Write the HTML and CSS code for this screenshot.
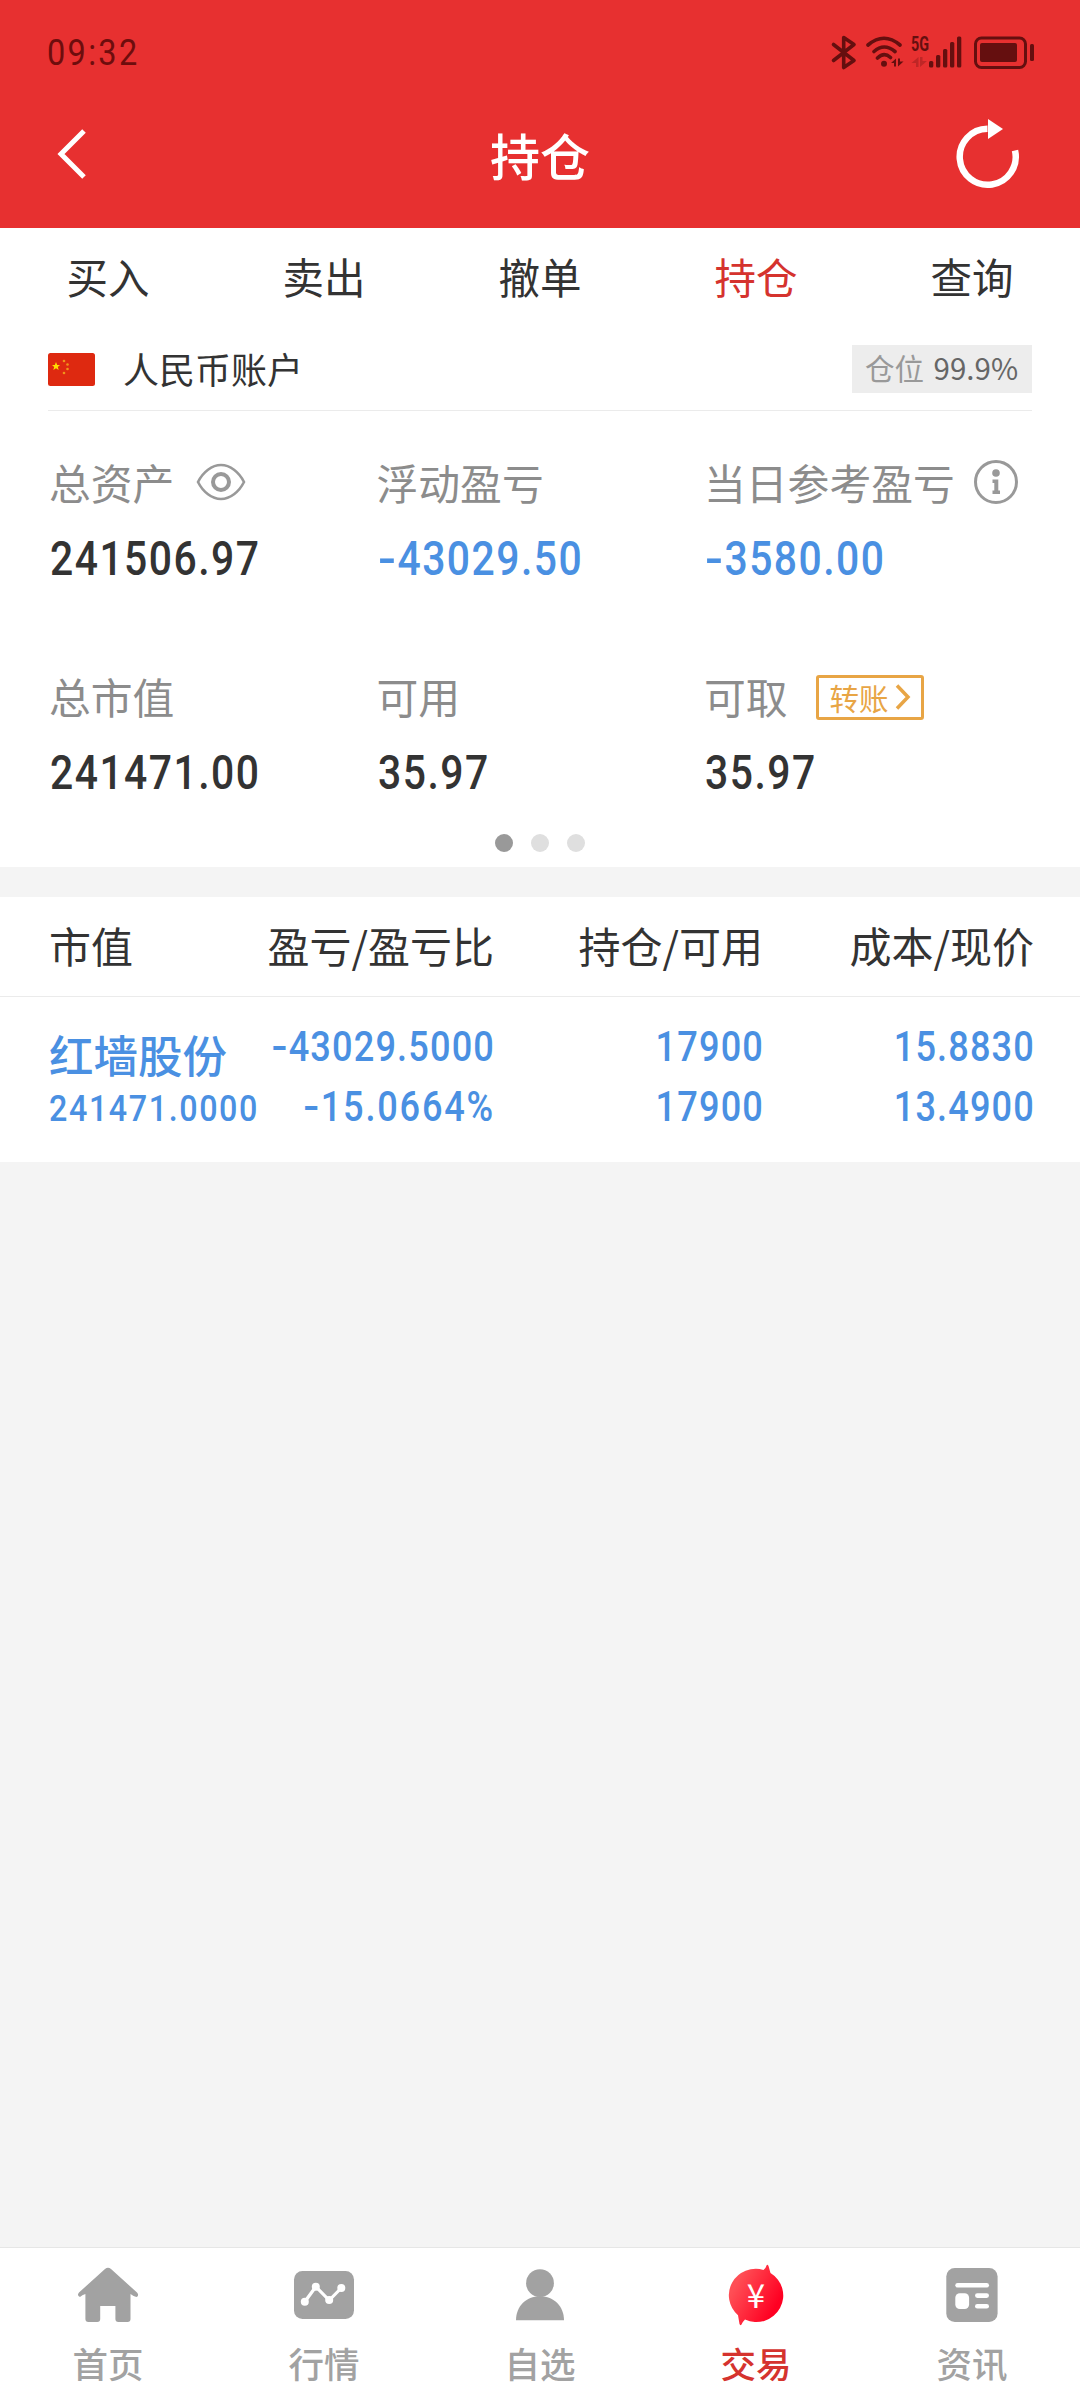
FILE: index.html
```html
<!DOCTYPE html>
<html lang="zh-CN">
<head>
    <meta charset="utf-8">
    <title>持仓</title>
    <link rel="stylesheet" href="styles.css">
</head>
<body>
<div id="app">
    <!-- 顶部 -->
    <header class="header">
        <div class="status">
            <span class="time">09:32</span>
            <svg class="status-icons" viewBox="30 30 208 44" width="208" height="44">
                <path class="s" stroke-width="3.6" d="M33.500 44.500L54 60.500L43.700 67.500V37.500L54 44.500L33.500 60.500"/>
                <path class="s" stroke-width="3.6" d="M68 45Q84 31.500 100 45M74 51.500Q84 42.500 95 51.500M77.500 58Q84 51.500 90.500 57.500"/>
                <circle cx="84" cy="63.800" r="3"/>
                <path d="M91 63L96 58.500V66.500H94V63ZM98 58.500H100V61.500H103.500L98 66.500Z"/>
                <text x="111" y="50.500" textLength="18" lengthAdjust="spacingAndGlyphs">5G</text>
                <path opacity=".3" d="M111.500 63L118.500 57V67H116V63ZM120 57H122.500V61H127L120 67Z"/>
                <rect x="129" y="61" width="4.300" height="6.500" rx="1.500"/>
                <rect x="136" y="55" width="4.300" height="12.500" rx="1.500"/>
                <rect x="143" y="49" width="4.300" height="18.500" rx="1.500"/>
                <rect x="150" y="42" width="4.300" height="25.500" rx="1.500"/>
                <rect x="157" y="36.500" width="4.300" height="31" rx="1.500"/>
                <rect class="s" x="175.500" y="38" width="50" height="29.500" rx="6" stroke-width="3"/>
                <rect x="180" y="43" width="37" height="19" rx="2"/>
                <rect x="230" y="44" width="4" height="17" rx="1.500"/>
            </svg>
        </div>
        <div class="title-bar">
            <svg class="back" viewBox="0 0 40 60" width="40" height="60"><path d="M34 7L11 30L34 53"/></svg>
            <h1>持仓</h1>
            <svg class="refresh" viewBox="0 0 72 76" width="72" height="76">
                <path class="ring" d="M63 34.500A28 28 0 1 1 35.500 12.800"/>
                <path class="arrow" d="M36 3L51 13L36 23Z"/>
            </svg>
        </div>
    </header>

    <!-- 交易菜单 -->
    <ul class="tabs">
        <li>买入</li>
        <li>卖出</li>
        <li>撤单</li>
        <li class="tab-on">持仓</li>
        <li>查询</li>
    </ul>

    <!-- 资产部分 -->
    <section class="asset">
        <div class="account">
            <svg class="flag" viewBox="0 0 47 33" width="47" height="33">
                <rect width="47" height="33" rx="2.500" fill="#de2910"/>
                <path fill="#ffde00" d="M8 9L9.200 12H12L9.800 14L10.700 17L8 15.200L5.300 17L6.200 14L4 12H6.800Z"/>
                <g fill="#f0941a"><circle cx="16" cy="8" r="1.300"/><circle cx="19.500" cy="11.500" r="1.300"/><circle cx="19.500" cy="16" r="1.300"/><circle cx="16" cy="20" r="1.300"/></g>
            </svg>
            <span class="account-name">人民币账户</span>
            <span class="position">仓位 <b>99.9%</b></span>
        </div>
        <div class="asset-list">
            <div class="item">
                <div class="label">总资产
                    <svg class="eye" viewBox="0 0 50 38" width="50" height="38">
                        <path d="M2 19C7 9 16 2 25 2S43 9 48 19C43 29 34 36 25 36S7 29 2 19Z"/>
                        <circle cx="25" cy="19" r="8"/>
                    </svg>
                </div>
                <div class="value">241506.97</div>
            </div>
            <div class="item">
                <div class="label">浮动盈亏</div>
                <div class="value blue"><i>-</i>43029.50</div>
            </div>
            <div class="item">
                <div class="label">当日参考盈亏
                    <svg class="info" viewBox="0 0 46 46" width="46" height="46">
                        <circle class="ring" cx="23" cy="23" r="20.500"/>
                        <circle cx="23" cy="14" r="3.800"/>
                        <path d="M19.500 20.500H25.300V31.500H27V35H19.500V31.500H21.300V24H19.500Z"/>
                    </svg>
                </div>
                <div class="value blue"><i>-</i>3580.00</div>
            </div>
            <div class="item">
                <div class="label">总市值</div>
                <div class="value">241471.00</div>
            </div>
            <div class="item">
                <div class="label">可用</div>
                <div class="value">35.97</div>
            </div>
            <div class="item">
                <div class="label">可取
                    <a class="transfer">转账<svg viewBox="0 0 16 28" width="16" height="28"><path d="M2 2.500L13 14L2 25.500"/></svg></a>
                </div>
                <div class="value">35.97</div>
            </div>
        </div>
        <div class="dots"><span class="dot-on"></span><span></span><span></span></div>
    </section>

    <!-- 持仓列表 -->
    <section class="hold">
        <div class="row hold-head">
            <span>市值</span><span>盈亏/盈亏比</span><span>持仓/可用</span><span>成本/现价</span>
        </div>
        <div class="row hold-row">
            <div><p class="name">红墙股份</p><p class="market">241471.0000</p></div>
            <div><p class="num"><i>-</i>43029.5000</p><p class="num percent"><i>-</i>15.0664%</p></div>
            <div><p class="num">17900</p><p class="num">17900</p></div>
            <div><p class="num">15.8830</p><p class="num">13.4900</p></div>
        </div>
    </section>

    <!-- 底部导航 -->
    <nav class="nav">
        <a>
            <svg viewBox="0 0 72 72" width="72" height="72">
                <path d="M33 10Q36 7.500 39 10L65 33.500Q67.500 36.500 64.500 38Q62 37.800 58.500 35V60Q58.500 63 55.500 63H46.400Q43.400 63 43.400 60V47H28.200V60Q28.200 63 25.200 63H16.400Q13.400 63 13.400 60V35Q10 36 8 38Q4.500 36.500 7 33.500Z"/>
            </svg>
            <span>首页</span>
        </a>
        <a>
            <svg viewBox="0 0 72 72" width="72" height="72">
                <rect x="6" y="12" width="60" height="48" rx="8.500"/>
                <path fill="none" stroke="#fff" stroke-width="3.200" d="M16.800 42.700L27.800 27.700L41.200 41.300L53.300 29"/>
                <g fill="#fff"><circle cx="16.800" cy="42.700" r="4"/><circle cx="27.800" cy="27.700" r="4"/><circle cx="41.200" cy="41" r="4"/><circle cx="53.300" cy="29" r="4"/></g>
            </svg>
            <span>行情</span>
        </a>
        <a>
            <svg viewBox="0 0 72 72" width="72" height="72">
                <circle cx="36" cy="24.200" r="13.900"/>
                <path d="M12 61.300C12 47.500 22 37.300 36 37.300S60 47.500 60 61.300Z"/>
            </svg>
            <span>自选</span>
        </a>
        <a class="nav-on">
            <svg viewBox="0 0 72 72" width="72" height="72">
                <defs>
                    <linearGradient id="red" x1="0" y1="0.200" x2="1" y2="0.800">
                        <stop offset="0.150" stop-color="#ff4e55"/>
                        <stop offset="0.850" stop-color="#ff0022"/>
                    </linearGradient>
                </defs>
                <path fill="url(#red)" d="M43.500 10.900Q46 9 46.500 6.500Q47.500 5 48.500 7L50.500 14A27 26.500 0 0 1 25 60.600Q23 62.500 21.500 65.500Q20.300 67 19.500 65L18 56.200A27 26.500 0 0 1 43.500 10.900Z"/>
                <text x="36" y="48.500" text-anchor="middle">¥</text>
            </svg>
            <span>交易</span>
        </a>
        <a>
            <svg viewBox="0 0 72 72" width="72" height="72">
                <rect x="10.300" y="9" width="51.300" height="54" rx="8.500"/>
                <g fill="#fff">
                    <rect x="19.300" y="24" width="33.700" height="4.600" rx="2.300"/>
                    <rect x="19.300" y="34.300" width="13.800" height="15.700" rx="4.500"/>
                    <rect x="39" y="34.300" width="14" height="4.600" rx="2.300"/>
                    <rect x="39" y="45" width="14" height="4.600" rx="2.300"/>
                </g>
            </svg>
            <span>资讯</span>
        </a>
    </nav>
</div>
</body>
</html>
```
FILE: styles.css
```css
body,h1,p,ul,li{margin: 0;padding: 0;}
ul{list-style: none;}
b{font-weight: inherit;}
svg{display: block;flex: none;}

body{background: #f4f4f4;color: #333;font-family: "Noto Sans CJK SC", sans-serif;}
#app{display: flex;flex-direction: column;width: 1080px;height: 2400px;overflow: hidden;}

/* 顶部 */
.header{height: 228px;background: #e73030;}
.status{display: flex;justify-content: space-between;height: 104px;padding: 0 42px 0 47px;align-items: center;}
.time{margin-top: 1px;color: #6e0d0d;font: 400 36.5px/44px Roboto, sans-serif;letter-spacing: 2.6px;transform: scaleX(.89);transform-origin: left;}
.status-icons{fill: #650f0f;}
.status-icons .s{fill: none;stroke: #650f0f;stroke-linejoin: round;stroke-linecap: round;}
.status-icons text{font: bold 19.5px Roboto, sans-serif;}
.title-bar{display: flex;align-items: center;justify-content: space-between;height: 100px;padding: 0 56px 0 50px;}
.title-bar h1{margin-left: 38px;color: #fff;font-size: 50px;font-weight: 500;line-height: 100px;}
.back path{fill: none;stroke: #fff;stroke-width: 5;}
.refresh .ring{fill: none;stroke: #fff;stroke-width: 6.5;}
.refresh .arrow{fill: #fff;}

/* 交易菜单 */
.tabs{display: flex;height: 100px;background: #fff;}
.tabs li{flex: 1;text-align: center;font-size: 41.5px;line-height: 97px;}
.tabs .tab-on{color: #d5332e;}

/* 资产 */
.asset{height: 539px;background: #fff;}
.account{display: flex;align-items: center;height: 82px;margin: 0 48px;border-bottom: 1px solid #ebebeb;}
.account-name{flex: 1;margin-left: 28px;font-size: 36px;line-height: 78px;height: 80px;}
.position{width: 180px;height: 48px;box-sizing: border-box;padding-left: 13px;background: #ededed;color: #999;font-size: 29.5px;line-height: 45px;white-space: nowrap;}
.position b{margin-left: 3px;color: #666;}
.asset-list{display: grid;grid-template-columns: 327.5px 327.5px 1fr;grid-template-rows: 214px 176px;padding: 33px 0 0 49px;}
.label{display: flex;align-items: center;height: 76px;color: #8c8c8c;font-size: 41.8px;line-height: 72px;}
.value{height: 76px;margin: 1px 0 0 1px;font: 500 47.5px/76px Roboto, sans-serif;letter-spacing: .036em;transform: scaleX(.86);transform-origin: left;}
.value i,.num i{display: inline-block;margin-right: .1em;font-style: normal;transform: scaleX(1.3);transform-origin: left;}
.blue{color: #4a90e2;}
.eye{margin-left: 22px;fill: none;stroke: #999;stroke-width: 2.6;}
.eye circle{stroke-width: 4;}
.info{margin-left: 18px;fill: #999;}
.info .ring{fill: none;stroke: #999;stroke-width: 3;}
.transfer{display: flex;align-items: center;box-sizing: border-box;width: 108px;height: 45px;margin: 2px 0 0 28px;padding-left: 11px;border: 3px solid #e8a545;border-radius: 3px;color: #e8a545;font-size: 29.5px;line-height: 39px;}
.transfer svg{margin-left: 6px;fill: none;stroke: #e8a545;stroke-width: 3.5;}
.dots{display: flex;justify-content: center;gap: 18px;}
.dots span{width: 18px;height: 18px;border-radius: 50%;background: #dfdfdf;}
.dots .dot-on{background: #999;}

/* 持仓列表 */
.hold{margin-top: 30px;background: #fff;}
.row{display: grid;grid-template-columns: 210px 235px 269px 271px;padding-left: 49px;}
.row > :not(:first-child){text-align: right;}
.hold-head{height: 99px;border-bottom: 1px solid #ebebeb;font-size: 42px;line-height: 96px;white-space: nowrap;}
.hold-row{height: 145px;padding-top: 20px;color: #4a90e2;font: 500 42px/60px Roboto, sans-serif;letter-spacing: .032em;white-space: nowrap;}
.hold-row .name{height: 62px;font: 500 44.5px/74px "Noto Sans CJK SC", sans-serif;letter-spacing: 0;}
.hold-row .market{font-size: 37.5px;letter-spacing: .05em;line-height: 58px;transform: scaleX(.86);transform-origin: left;}
.hold-row .num{margin: 0 -1px 0 -60px;transform: scaleX(.86);transform-origin: right;}
.hold-row .percent{letter-spacing: .05em;}

/* 底部导航 */
.nav{display: flex;height: 152px;margin-top: auto;border-top: 1px solid #e6e6e6;background: #fff;}
.nav a{flex: 1;display: flex;flex-direction: column;align-items: center;padding-top: 11px;color: #a2a2a2;font-size: 35.5px;line-height: 64px;font-weight: 500;}
.nav svg{fill: #a2a2a2;}
.nav .nav-on{color: #d5332e;}
.nav text{fill: #fff;font: 400 33px "Noto Sans CJK SC", sans-serif;}
```
